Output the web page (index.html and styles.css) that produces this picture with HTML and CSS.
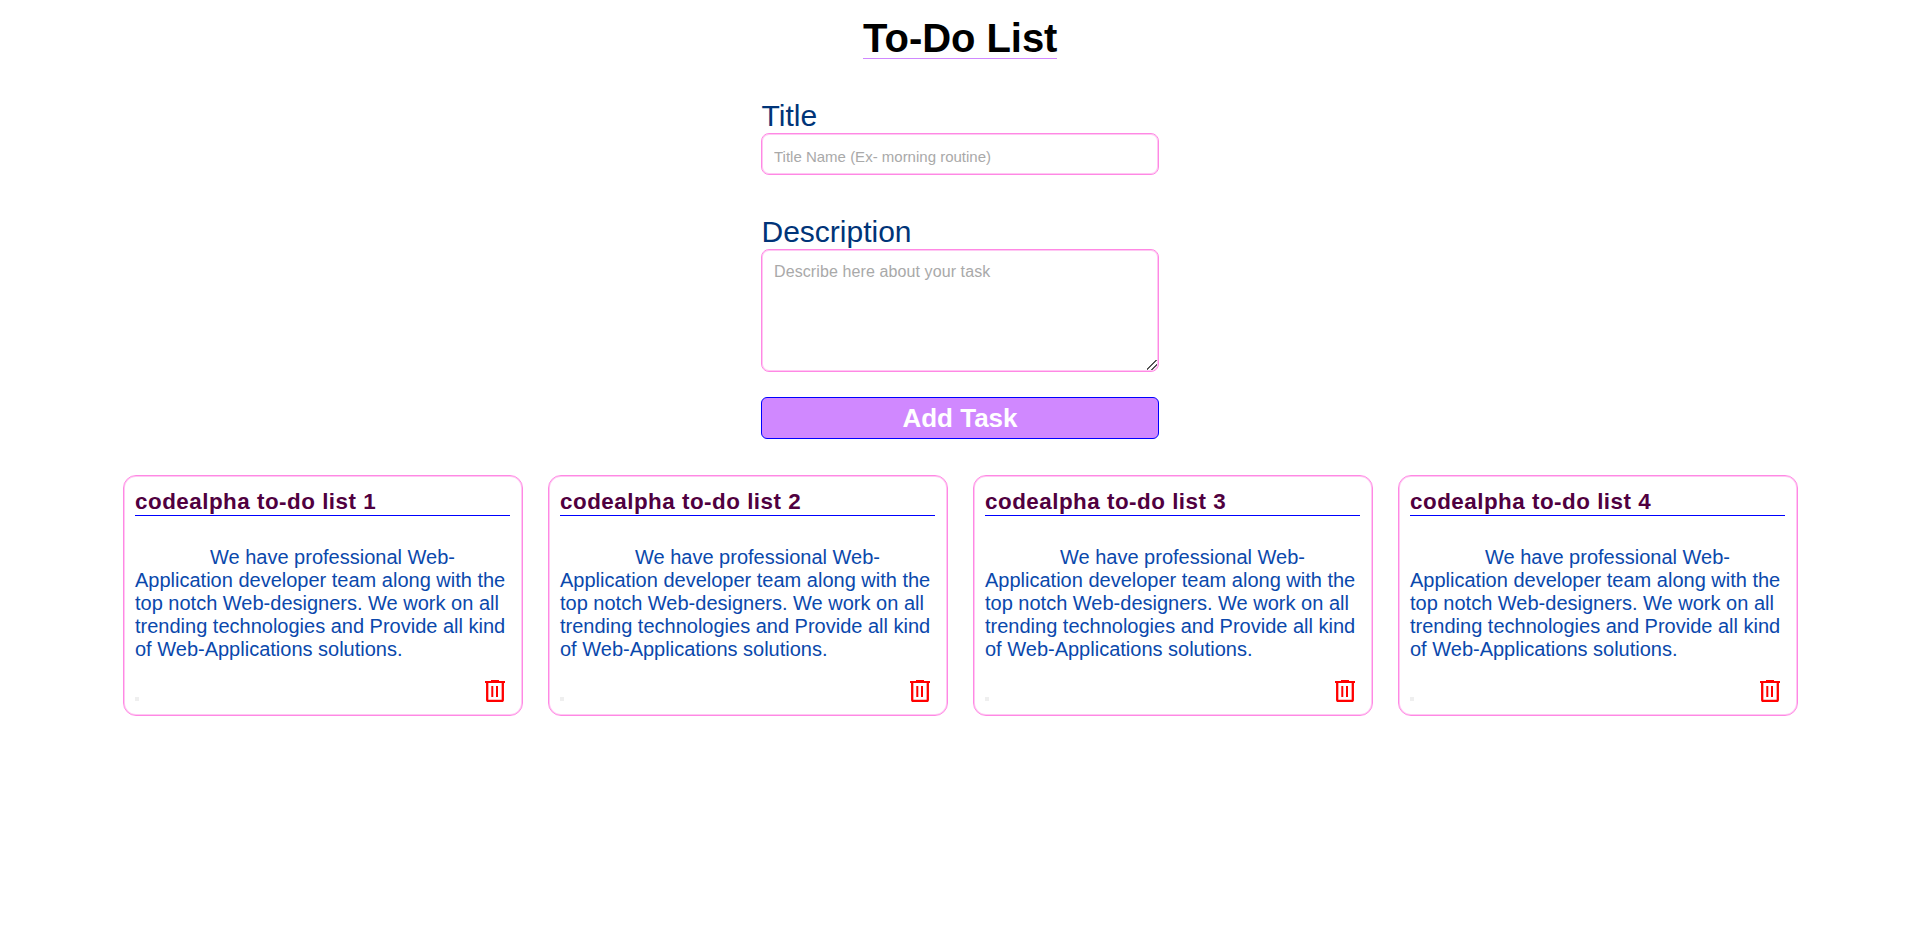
FILE: index.html
```
<!DOCTYPE html>
<html lang="en">
<head>
<meta charset="utf-8">
<title>To-Do List</title>
<link rel="stylesheet" href="styles.css">
</head>
<body>
<h1 class="heading">To-Do List</h1>
<form class="form">
  <label class="label" for="title">Title</label>
  <input class="field title-field" id="title" type="text" placeholder="Title Name (Ex- morning routine)">
  <label class="label" for="desc">Description</label>
  <textarea class="field desc-field" id="desc" placeholder="Describe here about your task"></textarea>
  <button class="add" type="button">Add Task</button>
</form>
<main class="cards" id="cards"></main>
<script src="script.js"></script>
</body>
</html>
```

FILE: styles.css
```
* {
  box-sizing: border-box;
  margin: 0;
  padding: 0;
}

body {
  font-family: Arial, "Liberation Sans", sans-serif;
  background: #fff;
  display: flex;
  flex-direction: column;
  align-items: center;
}

.heading {
  margin: 15px 0 0 0.5px;
  height: 44px;
  font-size: 40px;
  line-height: 46px;
  letter-spacing: -0.05px;
  border-bottom: 1px solid #d088ff;
}

.form {
  width: 398px;
  margin: 39px 0 0 0;
  display: flex;
  flex-direction: column;
}

.label {
  font-size: 30px;
  line-height: 35px;
  padding-left: 0.5px;
  color: #003478;
}

.field {
  width: 100%;
  border: 1px solid #ff88e4;
  border-radius: 8px;
  box-shadow: inset 0 0 0 1px #ffc8f3;
  font-family: inherit;
  color: #222;
  outline: none;
}

.field::placeholder {
  color: #a9a9a9;
}

.title-field {
  height: 42px;
  padding: 5px 12px 0;
  font-size: 15px;
  margin-bottom: 39px;
}

.desc-field {
  height: 123px;
  padding: 13px 12px 12px;
  font-size: 16px;
  line-height: 18px;
  letter-spacing: 0.1px;
  resize: both;
}

.desc-field::-webkit-resizer {
  background: linear-gradient(135deg, transparent 43%, #555 45%, #555 52%, transparent 54%, transparent 68%, #555 70%, #555 77%, transparent 79%) 4px 4px / 10px 10px no-repeat;
}

.add {
  height: 42px;
  margin-top: 25px;
  border: 1px solid #00f;
  border-radius: 6px;
  background: #d088ff;
  color: #fff;
  font-family: inherit;
  font-size: 26px;
  font-weight: bold;
}

.cards {
  display: flex;
  gap: 25px;
  margin: 36px 0 0 1px;
}

.card {
  width: 400px;
  height: 241px;
  padding: 11px 12px 13px 11px;
  border: 1px solid #ff88e4;
  border-radius: 13px;
  box-shadow: inset 0 0 0 1px #ffc8f3;
  display: flex;
  flex-direction: column;
}

.card-title {
  height: 29px;
  padding-top: 1px;
  font-size: 22.4px;
  line-height: 27px;
  letter-spacing: 0.5px;
  color: #500040;
  border-bottom: 1px solid #00f;
}

.card-text {
  margin-top: 30px;
  font-size: 20px;
  line-height: 23px;
  color: #0a48ac;
  text-indent: 75px;
}

.card-actions {
  margin-top: auto;
  display: flex;
  justify-content: space-between;
  align-items: flex-end;
}

.stub {
  width: 4px;
  height: 4px;
  margin-bottom: 1px;
  background: #efefef;
}

.trash {
  width: 20px;
  height: 22px;
  margin-right: 5px;
}
```

FILE: script.js
```
const text = "We have professional Web-Application developer team along with the top notch Web-designers. We work on all trending technologies and Provide all kind of Web-Applications solutions.";

document.getElementById("cards").innerHTML = [1, 2, 3, 4].map((n) => `
  <article class="card">
    <h2 class="card-title">codealpha to-do list ${n}</h2>
    <p class="card-text">${text}</p>
    <div class="card-actions">
      <span class="stub"></span>
      <svg class="trash" viewBox="0 0 20 22" fill="none" stroke="red">
        <path d="M0 2H20M6 .5H14" stroke-width="2.2"/>
        <path d="M2.2 2V20Q2.2 21 3.2 21H16.8Q17.8 21 17.8 20V2" stroke-width="2.3"/>
        <path d="M7.3 6V17M12 6V17" stroke-width="2"/>
      </svg>
    </div>
  </article>`).join("");
```
